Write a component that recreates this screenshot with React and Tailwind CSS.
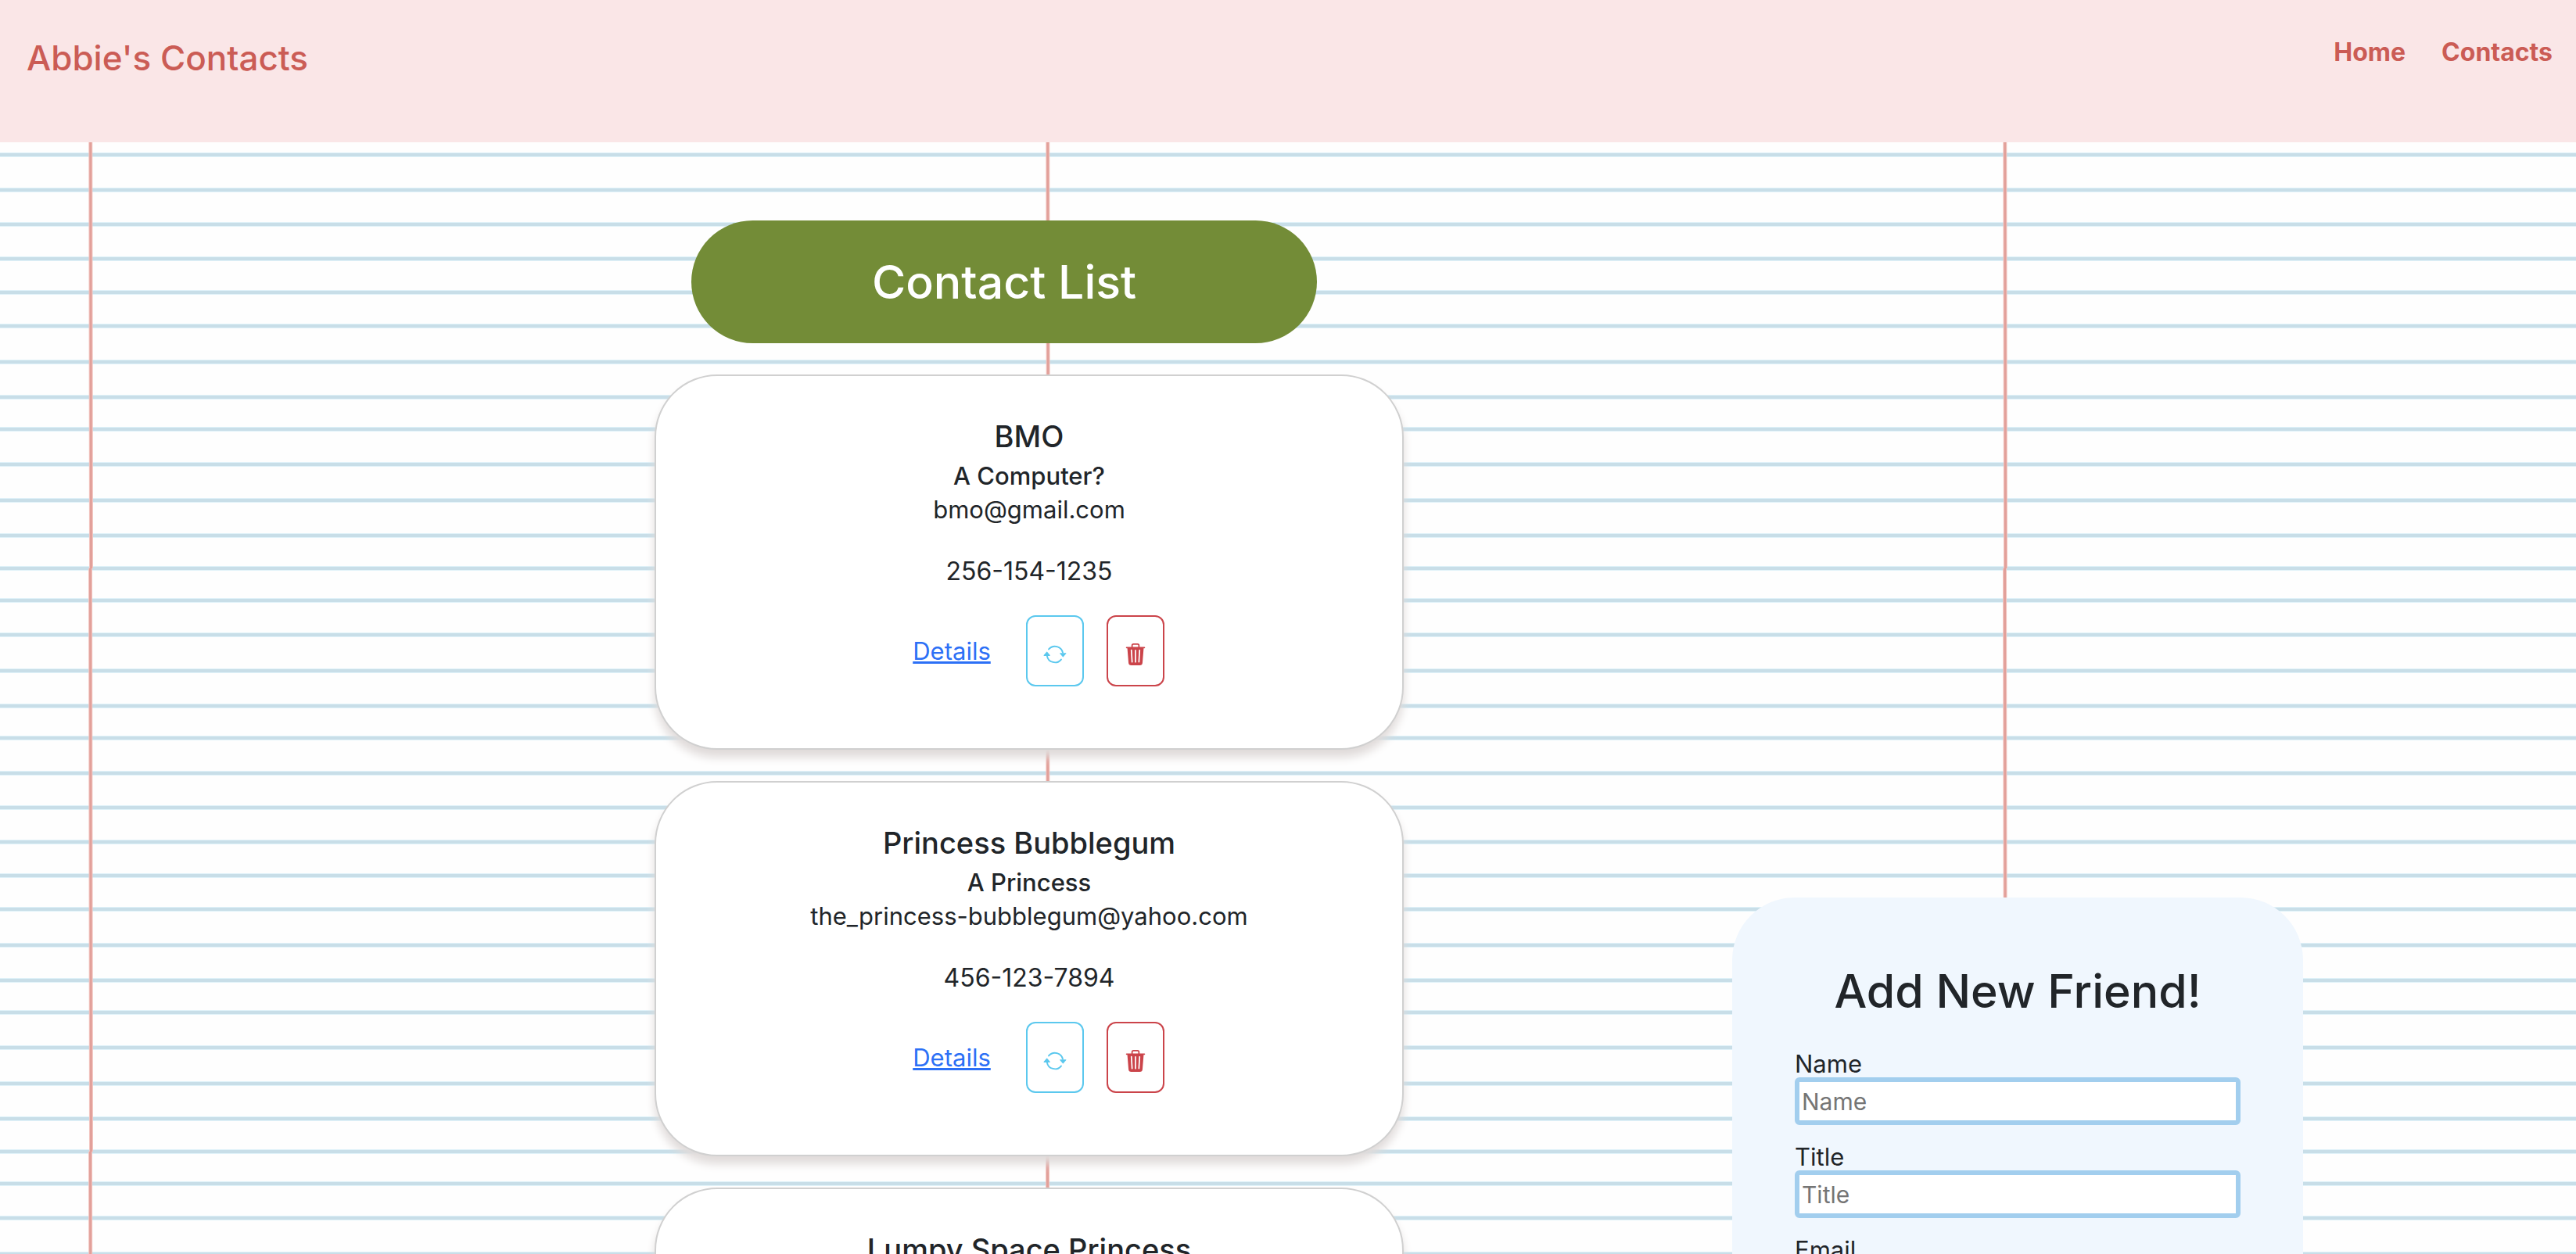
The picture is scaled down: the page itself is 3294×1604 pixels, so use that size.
import { BsArrowRepeat, BsTrash3Fill } from "react-icons/bs";

const contacts = [
  {
    name: "BMO",
    title: "A Computer?",
    email: "bmo@gmail.com",
    phone: "256-154-1235",
  },
  {
    name: "Princess Bubblegum",
    title: "A Princess",
    email: "the_princess-bubblegum@yahoo.com",
    phone: "456-123-7894",
  },
  { name: "Lumpy Space Princess" },
];

const fields = [
  { id: "name", label: "Name", type: "text" },
  { id: "title", label: "Title", type: "text" },
  { id: "email", label: "Email", type: "email" },
];

// Centres of the ruled lines within one sheet of paper
const rules = [
  10, 51, 95, 141, 186, 227, 272, 316, 360, 403, 446, 492, 537, 578, 623, 669,
  714,
];

function Paper() {
  return (
    <svg
      aria-hidden="true"
      className="pointer-events-none absolute inset-0 -z-10 h-full w-full"
    >
      <defs>
        <pattern
          id="ruled"
          x="0"
          y="-29"
          width="1224"
          height="746"
          patternUnits="userSpaceOnUse"
        >
          <rect width="1224" height="746" fill="#fefefe" />
          {rules.map((y) => (
            <g key={y}>
              <rect y={y - 3} width="1224" height="6" fill="#e0f2f9" />
              <rect y={y - 2} width="1224" height="4" fill="#c8dee8" />
            </g>
          ))}
          <path d="M113 10h5l1 736h-5z M114 0h5v10h-5z" fill="#f3c6c1" />
          <path d="M114 10h3l1 736h-3z M115 0h3v10h-3z" fill="#e2a09a" />
        </pattern>
      </defs>
      <rect width="100%" height="100%" fill="url(#ruled)" />
    </svg>
  );
}

function Header() {
  return (
    <header className="flex h-[182px] items-start justify-between bg-[#fae6e7] pt-[42px] pr-[30px] pl-[34px] text-[#cb5c55]">
      <a href="#home" className="text-[44px] leading-[64px] font-medium">
        Abbie's Contacts
      </a>
      <nav className="flex gap-[46px] text-[32px] leading-[50px] font-bold">
        <a href="#home">Home</a>
        <a href="#contacts">Contacts</a>
      </nav>
    </header>
  );
}

function ContactCard({ name, title, email, phone }) {
  return (
    <article className="min-h-[480px] rounded-[80px] border-2 border-[#d0d0d0] bg-white px-8 pt-[52px] pb-[79px] text-center shadow-[0_10px_12px_#e0dbda]">
      <h2 className="mb-1 text-[38px] leading-[50px] font-medium">{name}</h2>
      {email && (
        <>
          <h3 className="text-[31px] leading-[44px] font-medium">{title}</h3>
          <p className="mb-[34px] text-[31px] leading-[42px]">{email}</p>
          <p className="mb-8 text-[32px] leading-[48px]">{phone}</p>
          <div className="flex items-center justify-center gap-[29px] pl-6">
            <a
              href="#details"
              className="mr-4 text-[31px] leading-[48px] text-[#2c70f6] underline decoration-[3px] underline-offset-2"
            >
              Details
            </a>
            <button
              type="button"
              aria-label={`Update ${name}`}
              className="flex h-[91px] w-[74px] items-center justify-center rounded-xl border-2 border-[#5bc8ee] pt-2 text-[30px] text-[#5bc8ee]"
            >
              <BsArrowRepeat />
            </button>
            <button
              type="button"
              aria-label={`Delete ${name}`}
              className="flex h-[91px] w-[74px] items-center justify-center rounded-xl border-2 border-[#cb444a] pt-2 text-[28px] text-[#cb444a]"
            >
              <BsTrash3Fill />
            </button>
          </div>
        </>
      )}
    </article>
  );
}

function AddFriendForm() {
  return (
    <form className="col-start-4 mt-[866px] flex flex-col self-start rounded-[80px] bg-[#f0f7fe] p-20">
      <h1 className="mb-9 text-center text-[59px] leading-[80px] font-medium whitespace-nowrap">
        Add New Friend!
      </h1>
      <div className="flex flex-col gap-6">
        {fields.map(({ id, label, type }) => (
          <div key={id} className="flex flex-col">
            <label htmlFor={id} className="text-[31px] leading-[34px]">
              {label}
            </label>
            <input
              id={id}
              type={type}
              placeholder={label}
              className="h-[61px] w-full rounded-md border-6 border-[#a2ceee] bg-white px-[3px] text-[30px] placeholder:text-[#757575]"
            />
          </div>
        ))}
      </div>
    </form>
  );
}

export default function App() {
  return (
    <div className="relative isolate h-screen overflow-hidden font-['Inter',sans-serif] text-[#212529]">
      <Paper />
      <div className="h-full overflow-y-auto [scrollbar-width:none]">
        <Header />
        <main className="grid grid-cols-[837fr_958fr_420fr_730fr_349fr] pt-[100px]">
          <section className="col-start-2 flex flex-col gap-10">
            <h1 className="ml-[47px] w-[800px] max-w-full rounded-full bg-[#738c37] py-10 text-center text-[59px] leading-[77px] font-medium text-white">
              Contact List
            </h1>
            {contacts.map((contact) => (
              <ContactCard key={contact.name} {...contact} />
            ))}
          </section>
          <AddFriendForm />
        </main>
      </div>
    </div>
  );
}
